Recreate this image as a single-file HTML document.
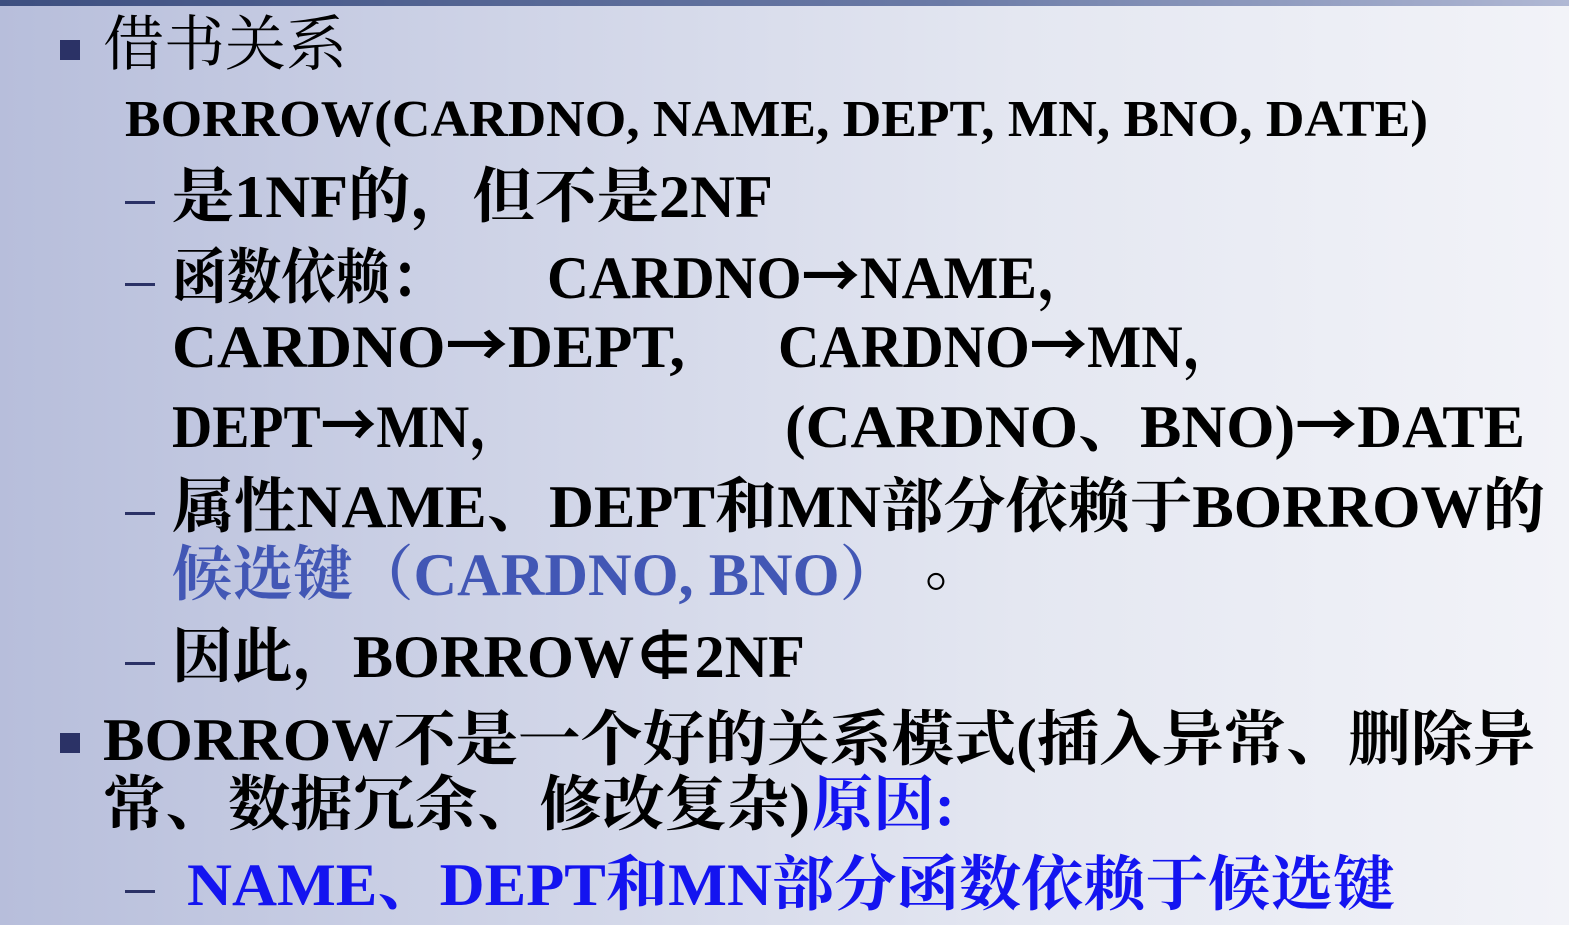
<!DOCTYPE html>
<html><head><meta charset="utf-8"><style>
html,body{margin:0;padding:0}
body{width:1569px;height:925px;overflow:hidden;position:relative;
background:linear-gradient(90deg,#b7bedb 0%,#cdd2e6 30%,#e4e7f1 65%,#f2f3f8 100%);
font-family:"Liberation Serif","Noto Serif CJK SC",serif;font-weight:bold;color:#000}
.top{position:absolute;left:0;top:0;width:1569px;height:6px;background:linear-gradient(90deg,#3d4f80,#6a7aa6 60%,#b0b8d4)}
.t{position:absolute;white-space:nowrap;line-height:1;transform-origin:0 50%}
.a{font-family:"Noto Sans CJK SC",sans-serif;font-weight:bold;line-height:0}
.sq{position:absolute;width:20px;height:20px;background:#2b3266}
.d{position:absolute;width:30px;height:3px;background:#2b3266}
.b1{color:#4257b5}.b2{color:#1414f0}
</style></head><body>
<div class="top"></div>
<div class="sq" style="left:60px;top:40px"></div>
<div class="sq" style="left:60px;top:733px"></div>
<div class="d" style="left:125px;top:201px"></div>
<div class="d" style="left:125px;top:283px"></div>
<div class="d" style="left:125px;top:512px"></div>
<div class="d" style="left:125px;top:662px"></div>
<div class="d" style="left:125px;top:890px"></div>

<div class="t" style="font-weight:normal">借书关系</div>
<div class="t">BORROW(CARDNO, NAME, DEPT, MN, BNO, DATE)</div>
<div class="t">是1NF的，但不是2NF</div>
<div class="t">函数依赖：</div>
<div class="t">CARDNO<span class="a">→</span>NAME，</div>
<div class="t">CARDNO<span class="a">→</span>DEPT,</div>
<div class="t">CARDNO<span class="a">→</span>MN，</div>
<div class="t">DEPT<span class="a">→</span>MN，</div>
<div class="t">(CARDNO、BNO)<span class="a">→</span>DATE</div>
<div class="t">属性NAME、DEPT和MN部分依赖于BORROW的</div>
<div class="t b1">候选键（CARDNO, BNO）</div>
<div class="t">。</div>
<div class="t">因此，BORROW<span class="a">∉</span>2NF</div>
<div class="t">BORROW不是一个好的关系模式(插入异常、删除异</div>
<div class="t">常、数据冗余、修改复杂)</div>
<div class="t b2">原因:</div>
<div class="t b2">NAME、DEPT和MN部分函数依赖于候选键</div>
<script>
var L=[[103,347,45,60],[125,1428,120,52],[172,773,197,60],[172,445,278,60],[547,1095,278,60],
[172,685,347,60],[778,1240,347,60],[172,525,427,60],[785,1525,427,60],[172,1545,507,60],
[172,900,575,60],[925,955,565,60],[172,805,657,60],[103,1535,740,60],[103,810,805,60],[812,955,805,60],[187,1395,885,60]];
var els=document.querySelectorAll('.t');
for(var i=0;i<els.length;i++){var e=els[i],p=L[i];e.style.fontSize=p[3]+'px';e.style.left=p[0]+'px';
e.style.top=(p[2]-p[3]/2)+'px';var w=e.getBoundingClientRect().width;
if(i!=11){e.style.transform='scaleX('+((p[1]-p[0])/w)+')';}}
</script>
</body></html>
